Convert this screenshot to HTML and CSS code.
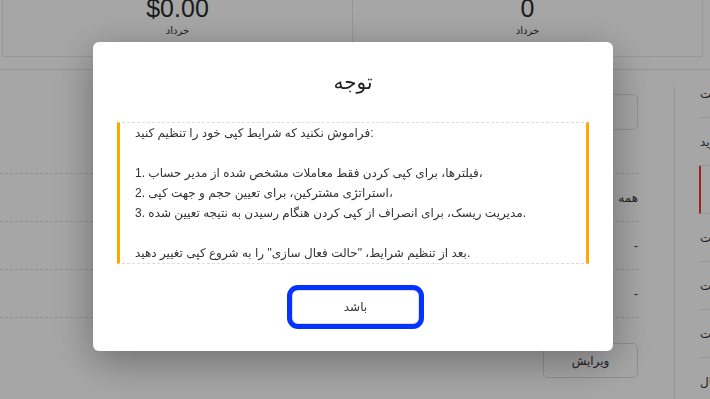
FILE: index.html
```html
<!DOCTYPE html>
<html lang="fa">
<head>
<meta charset="utf-8">
<title>توجه</title>
<link rel="stylesheet" href="styles.css">
</head>
<body>
<div class="page">
  <div class="stats">
    <div class="stat">
      <div class="val">$0.00</div>
      <div class="lbl">خرداد</div>
    </div>
    <div class="stat">
      <div class="val">0</div>
      <div class="lbl">خرداد</div>
    </div>
  </div>
  <div class="divider"></div>
  <div class="main">
    <div class="content">
      <div class="filter-row"><div class="field"></div></div>
      <div class="table">
        <div class="row head"></div>
        <div class="row"><span class="cell">همه</span></div>
        <div class="row"><span class="cell">-</span></div>
        <div class="row"><span class="cell">-</span></div>
      </div>
      <div class="actions"><button class="edit">ویرایش</button></div>
    </div>
    <div class="sidebar">
      <div class="vline"></div>
      <div class="menu">
        <div class="item">مدیریت</div>
        <div class="item">خرید</div>
        <div class="item active"><span class="hidden-label">معاملات</span></div>
        <div class="item">تنظیمات</div>
        <div class="item">گزارشات</div>
        <div class="item">اطلاعات</div>
        <div class="item">کانال</div>
      </div>
    </div>
  </div>
</div>

<div class="overlay">
  <div class="modal">
    <div class="title">توجه</div>
    <div class="notice">فراموش نکنید که شرایط کپی خود را تنظیم کنید:

1. فیلترها، برای کپی کردن فقط معاملات مشخص شده از مدیر حساب،
2. استراتژی مشترکین، برای تعیین حجم و جهت کپی،
3. مدیریت ریسک، برای انصراف از کپی کردن هنگام رسیدن به نتیجه تعیین شده.

بعد از تنظیم شرایط، "حالت فعال سازی" را به شروع کپی تغییر دهید.</div>
    <div class="footer"><button class="ok">باشد</button></div>
  </div>
</div>
</body>
</html>
```

FILE: styles.css
```css
* { box-sizing: border-box; }

html, body {
  margin: 0;
  height: 100%;
  overflow: hidden;
}

body {
  font-family: "Liberation Sans", "DejaVu Sans", sans-serif;
  background: #ffffff;
  color: #333333;
}

.page {
  width: 710px;
}

/* top statistic cards (scrolled partially out of view) */
.stats {
  display: flex;
  margin: -7px 7px 0 2px;
  height: 64px;
  border: 1px solid #e8e8e8;
  border-top: none;
}

.stat {
  flex: 1;
  display: flex;
  flex-direction: column;
  align-items: center;
}

.stat + .stat {
  border-left: 1px solid #e8e8e8;
}

.val {
  font-size: 25px;
  line-height: 30px;
  color: #2b2b2b;
}

.lbl {
  font-size: 10px;
  line-height: 16px;
  color: #2b2b2b;
}

.divider {
  margin-top: 12px;
  border-top: 1px solid #e4e4e4;
}

.main {
  display: flex;
  height: 330px;
}

.content {
  flex: none;
  width: 639px;
  padding-top: 24px;
}

.filter-row {
  display: flex;
  justify-content: flex-end;
  padding-right: 1px;
}

.field {
  width: 200px;
  height: 36px;
  border: 1px solid #dedede;
  border-radius: 5px;
}

.table {
  direction: rtl;
}

.row {
  height: 48px;
  border-bottom: 1px dashed #d9d9d9;
  display: flex;
  align-items: center;
  padding-right: 1px;
  font-size: 12px;
  color: #333;
}

.row.head {
  height: 44px;
}

.actions {
  display: flex;
  justify-content: flex-end;
  padding-top: 25px;
  padding-right: 1px;
}

.edit {
  width: 95px;
  height: 35px;
  border: 1px solid #dcdcdc;
  border-radius: 5px;
  background: #fff;
  font-family: inherit;
  font-size: 12px;
  color: #333;
}

.sidebar {
  flex: none;
  width: 200px;
  margin-left: 35px;
  display: flex;
}

.vline {
  margin-top: 16px;
  border-left: 1px solid #e4e4e4;
}

.menu {
  padding-left: 24px;
  flex: 1;
}

.item {
  height: 48px;
  border-bottom: 1px solid #e6e6e6;
  display: flex;
  align-items: center;
  padding-left: 1px;
  white-space: nowrap;
  font-size: 12px;
  color: #333;
}

.item.active {
  border-left: 2px solid #f03a2e;
  padding-left: 30px;
}

.hidden-label {
  color: #333;
}

/* modal */
.overlay {
  position: fixed;
  inset: 0;
  background: rgba(0, 0, 0, 0.35);
  display: flex;
  align-items: flex-start;
  padding: 42px 0 0 93px;
}

.modal {
  width: 520px;
  background: #fff;
  border-radius: 6px;
  box-shadow: 0 10px 40px rgba(0, 0, 0, 0.35);
  padding: 0 24px 27px;
}

.title {
  padding-top: 24px;
  margin-bottom: 24px;
  text-align: center;
  font-size: 20px;
  line-height: 32px;
  color: #222;
}

.notice {
  border-left: 3px solid #ffa800;
  border-right: 3px solid #ffa800;
  border-top: 1px dashed #dddddd;
  border-bottom: 1px dashed #dddddd;
  padding: 0 15px;
  white-space: pre-line;
  direction: ltr;
  text-align: left;
  font-size: 12px;
  line-height: 20px;
  color: #333;
}

.footer {
  display: flex;
  justify-content: center;
  padding-top: 26px;
  padding-left: 5px;
}

.ok {
  width: 127px;
  height: 34px;
  border: 1px solid #dddddd;
  border-radius: 6px;
  background: #fff;
  outline: 5px solid #0433ff;
  font-family: inherit;
  font-size: 12px;
  color: #333;
}
```
